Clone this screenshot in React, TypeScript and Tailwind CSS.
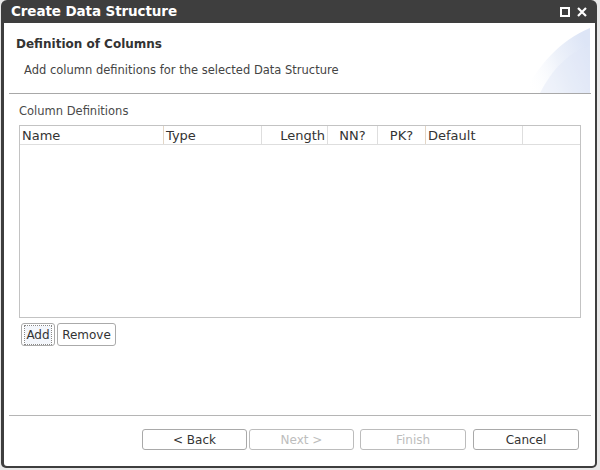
import React from "react";

const cols = [
    {label: "Name", w: "w-[144px]", align: "text-left", sep: "border-[#e3d6c6]"},
    {label: "Type", w: "w-[98px]", align: "text-left", sep: "border-[#dedede]"},
    {label: "Length", w: "w-[66px]", align: "text-right", sep: "border-[#dedede]"},
    {label: "NN?", w: "w-[50px]", align: "text-center", sep: "border-[#dedede]"},
    {label: "PK?", w: "w-[48px]", align: "text-center", sep: "border-[#e3d6c6]"},
    {label: "Default", w: "w-[97px]", align: "text-left", sep: "border-[#dedede]"},
];

function HeaderSwoosh() {
    return (
        <svg className="absolute right-[1px] top-[5px]" width="66" height="65" viewBox="0 0 66 65">
            <defs>
                <linearGradient id="sw" x1="0" y1="0.8" x2="1" y2="0.4">
                    <stop offset="0" stopColor="#ffffff" stopOpacity="0"/>
                    <stop offset="0.55" stopColor="#eef2fa"/>
                    <stop offset="1" stopColor="#dde5f6"/>
                </linearGradient>
            </defs>
            <path d="M0 65 C14 38 36 12 66 0 L66 65 Z" fill="url(#sw)"/>
            <path d="M16 65 C28 42 44 24 66 18 L66 65 Z" fill="#dfe6f6" opacity="0.45"/>
        </svg>
    )
}

function WizButton({label, disabled, w}: { label: string, disabled?: boolean, w: string }) {
    return (
        <button type="button"
                className={`${w} h-[21px] rounded-[3px] border bg-white text-[12px] leading-none
                    ${disabled ? "text-[#bdbdbd] border-[#bcbcbc]" : "text-[#333] border-[#a9a9a9]"}`}>
            {label}
        </button>
    )
}

export default function App() {
    return (
        <div className="w-[600px] h-[470px] bg-[#e8e8e8] overflow-hidden font-['DejaVu_Sans',sans-serif]">
            <div className="ml-[1px] w-[596px] h-[468px] bg-[#3e3e3e] rounded-t-[6px] rounded-b-[5px] flex flex-col pl-[3px] pr-[2px] pb-[2px]">

                {/* title bar */}
                <div className="h-[23px] flex items-center pl-[7px] pr-[8px] shrink-0">
                    <span className="text-white font-bold text-[13.5px] tracking-[-0.1px]">Create Data Structure</span>
                    <div className="ml-auto flex items-center gap-[7px]">
                        <svg width="10" height="10" viewBox="0 0 10 10">
                            <rect x="1" y="1" width="8" height="8" fill="none" stroke="#fff" strokeWidth="2"/>
                        </svg>
                        <svg width="10" height="10" viewBox="0 0 10 10">
                            <path d="M1 1 L9 9 M9 1 L1 9" stroke="#fff" strokeWidth="2.2"/>
                        </svg>
                    </div>
                </div>

                <div className="flex-1 bg-white rounded-b-[3px] flex flex-col">
                    {/* header */}
                    <div className="relative h-[71px] ml-[5px] mr-[4px] border-b border-[#a8a8a8] shrink-0">
                        <HeaderSwoosh/>
                        <div className="relative pl-[7px] pt-[12px] text-[12px] font-bold text-[#333]">Definition of Columns</div>
                        <div className="relative pl-[15px] pt-[9px] text-[11.5px] text-[#444]">
                            Add column definitions for the selected Data Structure
                        </div>
                    </div>

                    <div className="pl-[15px] pr-[14px] flex flex-col">
                        <div className="mt-[10px] text-[11.5px] text-[#4a4a4a] leading-[14px]">Column Definitions</div>

                        <div className="mt-[7px] h-[193px] w-[562px] border border-[#c3c3c3] flex flex-col">
                            <div className="h-[19px] flex border-b border-[#dedede] text-[13px] text-[#333] leading-[20px]">
                                {cols.map((c) => (
                                    <div key={c.label} className={`${c.w} ${c.align} px-[2px] border-r ${c.sep}`}>
                                        {c.label}
                                    </div>
                                ))}
                            </div>
                        </div>

                        <div className="mt-[5px] flex gap-[2px] ml-[2px]">
                            <button type="button"
                                    className="w-[34px] h-[23px] flex items-center justify-center rounded-[3px] border border-[#aaa] bg-white text-[12px] text-[#333]">
                                <span className="px-[1px] outline-1 outline-dotted outline-[#888] bg-[#f3f6fb]">Add</span>
                            </button>
                            <button type="button"
                                    className="w-[59px] h-[23px] rounded-[3px] border border-[#aaa] bg-white text-[12px] text-[#333]">
                                Remove
                            </button>
                        </div>
                    </div>

                    <div className="flex-1"/>

                    <div className="ml-[5px] mr-[4px] border-t border-[#b5b5b5]"/>
                    <div className="flex pl-[138px] pt-[13px] pb-[16px]">
                        <WizButton label="< Back" w="w-[105px]"/>
                        <div className="w-[2px]"/>
                        <WizButton label="Next >" w="w-[105px]" disabled/>
                        <div className="w-[6px]"/>
                        <WizButton label="Finish" w="w-[106px]" disabled/>
                        <div className="w-[7px]"/>
                        <WizButton label="Cancel" w="w-[106px]"/>
                    </div>
                </div>
            </div>
        </div>
    )
}
